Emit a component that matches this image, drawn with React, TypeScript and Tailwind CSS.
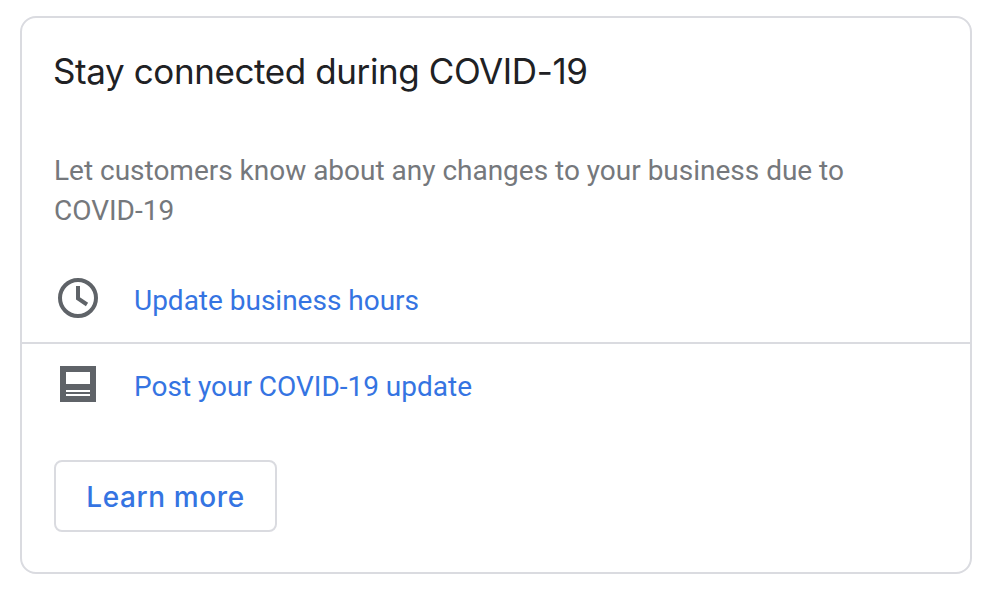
import * as React from "react"

function ClockIcon() {
  return (
    <svg viewBox="0 0 48 48" className="size-12 shrink-0" fill="none" stroke="#5f6368" strokeWidth="4" aria-hidden="true">
      <circle cx="24" cy="24" r="18" />
      <path d="M24 12v12.5l9 6" />
    </svg>
  )
}

function PostIcon() {
  return (
    <svg viewBox="0 0 48 48" className="size-12 shrink-0" aria-hidden="true">
      <path fill="#5f6368" d="M6 6h36v36H6z" />
      <path fill="#fff" d="M12 12h24v12H12zM12 30h24v2H12zM12 34h24v2H12z" />
    </svg>
  )
}

export default function App() {
  return (
    <main className="h-[598px] bg-white px-5 pt-4 font-['Roboto',sans-serif]">
      <section className="h-[558px] w-[952px] rounded-2xl border-2 border-[#dadbe0]">
        <h1 className="pr-8 pl-[31px] pt-[31px] font-['Inter',sans-serif] text-[35px] leading-[44px] font-normal tracking-[-0.4px] text-[#202124]">
          Stay connected during COVID-19
        </h1>
        <p className="mt-[58px] px-8 text-[28px] leading-10 tracking-[-0.01px] text-[#75787c]">
          Let customers know about any changes to your business due to COVID-19
        </p>

        <div className="mt-[23px] flex h-[90px] items-start border-b-2 border-[#dadbe0] px-8 pt-5">
          <ClockIcon />
          <a href="#" className="mt-[7px] ml-8 text-[28px] leading-10 tracking-[-0.01px] text-[#3574e2]">Update business hours</a>
        </div>
        <div className="flex h-[84px] items-start px-8 pt-4">
          <PostIcon />
          <a href="#" className="mt-[7px] ml-8 text-[28px] leading-10 tracking-[-0.01px] text-[#3574e2]">Post your COVID-19 update</a>
        </div>

        <button className="mt-8 ml-8 h-[72px] w-[223px] rounded-lg border-2 border-[#dadbe0] pt-px font-['Inter',sans-serif] text-[28px] font-medium tracking-[0.6px] text-[#3574e2]">
          Learn more
        </button>
      </section>
    </main>
  )
}
